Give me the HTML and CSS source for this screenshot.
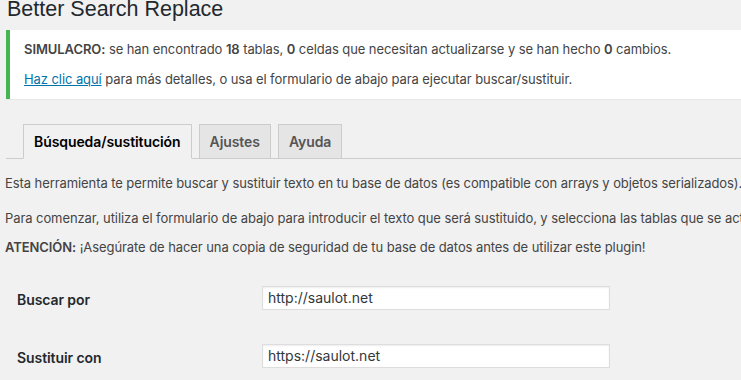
FILE: index.html
```html
<!DOCTYPE html>
<html lang="es">
<head>
  <meta charset="UTF-8">
  <meta name="viewport" content="width=device-width, initial-scale=1.0">
  <title>Better Search Replace</title>
  <link rel="stylesheet" href="styles.css">
</head>
<body>
  <div class="wrap">
    <h1>Better Search Replace</h1>

    <div class="notice">
      <p><strong>SIMULACRO:</strong> se han encontrado <strong>18</strong> tablas, <strong>0</strong> celdas que necesitan actualizarse y se han hecho <strong>0</strong> cambios.</p>
      <p><a href="#">Haz clic aquí</a> para más detalles, o usa el formulario de abajo para ejecutar buscar/sustituir.</p>
    </div>

    <div class="nav-tab-wrapper">
      <a class="nav-tab nav-tab-active" href="#">Búsqueda/sustitución</a>
      <a class="nav-tab" href="#">Ajustes</a>
      <a class="nav-tab" href="#">Ayuda</a>
    </div>

    <p class="intro">Esta herramienta te permite buscar y sustituir texto en tu base de datos (es compatible con arrays y objetos serializados).</p>
    <p class="intro">Para comenzar, utiliza el formulario de abajo para introducir el texto que será sustituido, y selecciona las tablas que se actualizarán.</p>
    <p class="intro warn"><strong>ATENCIÓN:</strong> ¡Asegúrate de hacer una copia de seguridad de tu base de datos antes de utilizar este plugin!</p>

    <div class="form-table">
      <label class="form-label" for="search_for">Buscar por</label>
      <input class="regular-text" type="text" id="search_for" value="http://saulot.net">

      <label class="form-label" for="replace_with">Sustituir con</label>
      <input class="regular-text" type="text" id="replace_with" value="https://saulot.net">
    </div>
  </div>
</body>
</html>
```

FILE: styles.css
```css
html {
  overflow: hidden;
}

body {
  margin: 0;
  background-color: #f1f1f1;
  color: #444;
  font-family: Inter, "Liberation Sans", Arial, sans-serif;
  font-size: 13px;
  line-height: 1.5;
  letter-spacing: -0.08px;
}

.wrap {
  padding-left: 6px;
}

h1 {
  margin: -4px 0 6.5px 1px;
  font-family: "Liberation Sans", Arial, sans-serif;
  font-size: 21.5px;
  font-weight: 400;
  line-height: 1.3;
  letter-spacing: 0;
  color: #23282d;
}

.notice {
  background-color: #fff;
  border-left: 4px solid #46b450;
  box-shadow: 0 1px 1px rgba(0, 0, 0, 0.04);
  padding: 1px 12px;
  margin-bottom: 25.5px;
}

.notice p {
  margin: 6.5px 0;
  padding: 2px;
  white-space: nowrap;
}

.notice strong {
  font-weight: 600;
}

.notice a {
  color: #0073aa;
}

.nav-tab-wrapper {
  display: flex;
  border-bottom: 1px solid #ccc;
  padding-left: 10px;
}

.nav-tab {
  margin-left: 7px;
  margin-bottom: -1px;
  padding: 5px 10px;
  border: 1px solid #ccc;
  background-color: #e5e5e5;
  color: #555;
  font-size: 14px;
  font-weight: 600;
  line-height: 23px;
  text-decoration: none;
}

.nav-tab-active {
  background-color: #f1f1f1;
  border-bottom-color: #f1f1f1;
  color: #000;
}

.intro {
  margin: 14.5px 0 0 -1px;
  white-space: nowrap;
}

.intro + .intro {
  margin-top: 16px;
}

.intro.warn {
  margin-top: 9px;
}

.intro strong {
  font-weight: 600;
}

.form-table {
  display: grid;
  grid-template-columns: 245px 348px;
  row-gap: 33px;
  align-items: center;
  margin-top: 28px;
  padding-left: 11px;
}

.form-label {
  padding-top: 4px;
  font-size: 14px;
  font-weight: 600;
  color: #23282d;
}

.regular-text {
  box-sizing: border-box;
  width: 348px;
  height: 24px;
  margin: 0;
  padding: 2px 5px;
  border: 1px solid #ddd;
  box-shadow: inset 0 1px 2px rgba(0, 0, 0, 0.07);
  background-color: #fff;
  color: #32373c;
  font-family: Inter, "Liberation Sans", Arial, sans-serif;
  font-size: 14px;
  outline: none;
}
```
